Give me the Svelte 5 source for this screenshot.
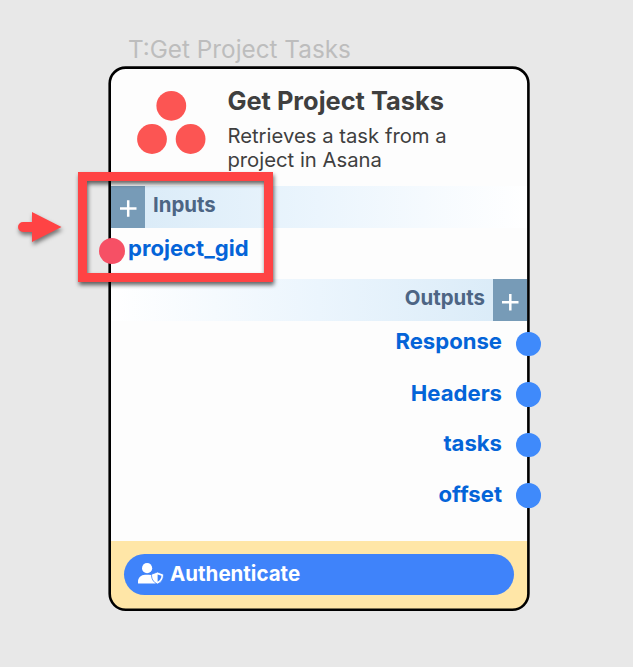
<script>
  const outputs = ['Response', 'Headers', 'tasks', 'offset'];
</script>

<main class="canvas">
  <div class="caption"><span>T:Get Project Tasks</span></div>
  <section class="card">
    <header>
      <svg class="logo" width="70" height="64" viewBox="0 0 70 64">
        <g fill="#fc5553">
          <circle cx="35.3" cy="15.8" r="14.9" />
          <circle cx="16" cy="49" r="14.9" />
          <circle cx="54.6" cy="49" r="14.9" />
        </g>
      </svg>
      <div class="heading">
        <h1>Get Project Tasks</h1>
        <p>Retrieves a task from a<br />project in Asana</p>
      </div>
    </header>

    <div class="bar in">
      <button class="add" aria-label="Add input">
        <svg width="34" height="42"><path d="M9 22.5h16.5M17.2 14.2v16.5" stroke="#fff" stroke-width="2.5" /></svg>
      </button>
      <span>Inputs</span>
    </div>
    <div class="input-row"><span>project_gid</span><i class="port red"></i></div>

    <div class="bar out">
      <span>Outputs</span>
      <button class="add" aria-label="Add output">
        <svg width="34" height="42"><path d="M9 23.3h16.5M17.3 15v16.5" stroke="#fff" stroke-width="2.5" /></svg>
      </button>
    </div>
    <div class="outputs">
      {#each outputs as name}
        <div class="output-row"><span>{name}</span><i class="port blue"></i></div>
      {/each}
    </div>

    <footer>
      <button class="auth">
        <svg width="26" height="22" viewBox="0 0 26 22">
          <circle cx="9.1" cy="5.2" r="5.1" fill="#fff" />
          <path d="M0 20.3v-1.6c0-4 3.1-7 7-7h4c1.4 0 2.6.4 3.7 1.1-.1 3.1 1 5.9 3.3 7.800H1.2C.5 20.6 0 20.7 0 20.3Z" fill="#fff" />
          <path d="M19.5 9 25.4 11.2c.5 3.9-1.6 8.1-5.9 9.9-4.3-1.8-6.4-6-5.9-9.9Z" fill="#fff" stroke="#3f83fa" stroke-width="0.8" />
          <path d="M19.6 11.5v7.2c2.6-1.5 3.8-3.6 3.8-5.9Z" fill="#3f83fa" />
        </svg>
        <span>Authenticate</span>
      </button>
    </footer>
    <svg class="frame" width="423" height="547"><rect x="1.7" y="1.6" width="418.7" height="542.2" rx="16" fill="none" stroke="#000" stroke-width="2.6" /></svg>
  </section>

  <div class="highlight"></div>
  <svg class="arrow" width="60" height="50" viewBox="0 0 60 50">
    <path d="M13 17H22V7L51.5 22 22 37V27H13a5 5 0 0 1 0-10Z" fill="#ff4344" />
  </svg>
</main>

<style>
  :global(body) { margin: 0; background: #e8e8e8; }
  .canvas {
    position: relative;
    box-sizing: border-box;
    width: 633px;
    height: 667px;
    padding: 32px 0 0 108px;
    overflow: hidden;
    background: #e8e8e8;
    font-family: Inter, "Liberation Sans", sans-serif;
  }
  .caption {
    height: 34px;
    padding-left: 20px;
    color: #bdbdbd;
    font-size: 24.3px;
    line-height: 34px;
    white-space: nowrap;
  }
  .card {
    position: relative;
    box-sizing: border-box;
    width: 422px;
    height: 545px;
    padding: 3px;
  }
  .card::before {
    content: "";
    position: absolute;
    inset: 1px;
    border-radius: 17px;
    background: linear-gradient(#fdfdfd 474px, #ffe6a7 474px);
  }
  .frame { position: absolute; left: 0; top: 0; pointer-events: none; }
  header { position: relative; display: flex; height: 117px; }
  .logo { margin: 21px 0 0 25px; flex: none; }
  .heading { margin: 17px 0 0 21.4px; white-space: nowrap; color: #3f3f3f; }
  h1 { margin: 0; font-size: 25.4px; line-height: 30px; font-weight: 700; }
  p { margin: 8px 0 0; font-size: 20.3px; line-height: 24px; }
  .bar {
    position: relative;
    display: flex;
    height: 42px;
    color: #4d6584;
    font-size: 20.4px;
    font-weight: 700;
    line-height: 38px;
  }
  .in { background: linear-gradient(90deg, #d8eaf7, #ebf5fd 50%, #fff); }
  .out { justify-content: flex-end; background: linear-gradient(270deg, #d8eaf7, #ebf5fd 50%, #fff); }
  .in span { margin-left: 8px; }
  .out span { margin-right: 8px; }
  button { border: 0; padding: 0; font: inherit; }
  .add { display: flex; width: 34px; height: 42px; background: #779bb7; }
  .input-row, .output-row {
    position: relative;
    display: flex;
    color: #0464d8;
    font-size: 22.1px;
    font-weight: 700;
  }
  .input-row { height: 51px; padding-left: 17px; line-height: 41px; }
  .outputs { height: 219px; }
  .output-row { height: 50.6px; justify-content: flex-end; padding-right: 25px; line-height: 43px; }
  .output-row:first-child { line-height: 41px; }
  .port { position: absolute; z-index: 2; border-radius: 50%; }
  .red { width: 26px; height: 26px; left: -12px; top: 10.4px; background: #f65065; }
  .blue { width: 24.6px; height: 24.6px; right: -13.5px; top: 10.6px; background: #3f8afb; }
  footer { position: relative; height: 68px; padding: 14px 13px 0; box-sizing: border-box; }
  .auth {
    display: flex;
    width: 390px;
    height: 41px;
    border-radius: 21px;
    background: #3f83fa;
    color: #fff;
    font-size: 20.5px;
    font-weight: 700;
    line-height: 40px;
  }
  .auth svg { margin: 9px 0 0 14px; }
  .auth span { margin-left: 6px; }
  .highlight {
    position: absolute;
    z-index: 4;
    left: 78px;
    top: 172px;
    box-sizing: border-box;
    width: 195px;
    height: 110px;
    border: 9px solid #ff4344;
    filter: drop-shadow(1px 3px 2px rgba(0, 0, 0, 0.6));
  }
  .arrow { position: absolute; left: 10px; top: 205px; filter: drop-shadow(1px 3px 2px rgba(0, 0, 0, 0.5)); }
</style>
